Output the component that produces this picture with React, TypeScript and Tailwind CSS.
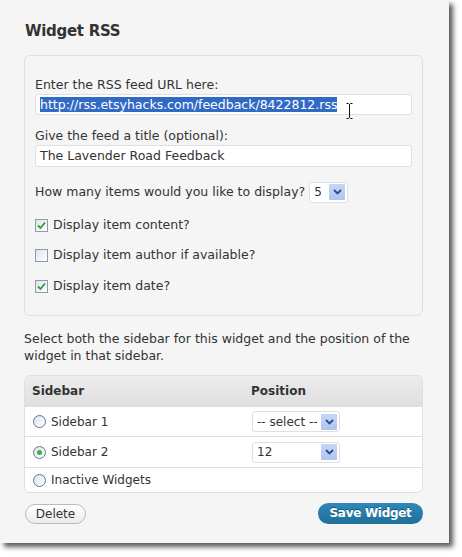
import React from "react";

function Check({ checked }: { checked: boolean }) {
  return (
    <span className="w-[13px] h-[13px] border border-[#8d9bab] bg-gradient-to-br from-[#dfe3e8] to-white flex items-center justify-center shrink-0">
      {checked && (
        <svg width="9" height="9" viewBox="0 0 9 9">
          <path d="M1 4.5 L3.5 7 L8 1.5" stroke="#2f9b3a" strokeWidth="1.8" fill="none" />
        </svg>
      )}
    </span>
  );
}

function Radio({ checked }: { checked: boolean }) {
  return (
    <span className="w-[13px] h-[13px] rounded-full border border-[#5b7895] bg-gradient-to-br from-[#dde3ea] to-white flex items-center justify-center shrink-0">
      {checked && <span className="w-[5px] h-[5px] rounded-full bg-[#3cb043]" />}
    </span>
  );
}

function Arrow() {
  return (
    <span className="w-[16px] h-[16px] bg-gradient-to-b from-[#c6d6f7] to-[#aec4ef] flex items-center justify-center rounded-[1px]">
      <svg width="9" height="6" viewBox="0 0 9 6">
        <path d="M1 1 L4.5 4.5 L8 1" stroke="#2b4c8c" strokeWidth="1.8" fill="none" />
      </svg>
    </span>
  );
}

function Select({ value, w }: { value: string; w: string }) {
  return (
    <div className={`${w} h-[21px] bg-white border border-[#dfdfdf] rounded-[3px] flex items-center justify-between pl-[4px] pr-[2px] text-[12px] text-[#333]`}>
      <span>{value}</span>
      <Arrow />
    </div>
  );
}

export default function App() {
  return (
    <div className="w-[462px] h-[557px] bg-white font-['DejaVu_Sans',sans-serif] text-[#333]">
      <div className="w-[449px] h-[543px] bg-[#f5f5f5] shadow-[4px_4px_5px_rgba(0,0,0,0.65)] px-[24px] pt-[21px]">
        <h2 className="text-[15px] font-bold leading-[20px] text-[#333] pl-[1px] tracking-[-0.3px]">Widget RSS</h2>
        <div className="mt-[14px] w-[399px] h-[261px] border border-[#dfdfdf] rounded-[6px] px-[10px] pt-[21px] text-[12.5px]">
          <div className="leading-[16px]">Enter the RSS feed URL here:</div>
          <div className="mt-[1px] h-[21px] bg-white border border-[#dfdfdf] rounded-[3px] flex items-center pl-[4px] relative">
            <span className="bg-[#316ac5] text-white leading-[15px]">http://rss.etsyhacks.com/feedback/8422812.rss</span>
            <svg className="absolute left-[310px] top-[8px]" width="7" height="16" viewBox="0 0 7 16">
              <path d="M0.5 0.5 H2.5 L3.5 1.5 L4.5 0.5 H6.5 M3.5 1.5 V14.5 M0.5 15.5 H2.5 L3.5 14.5 L4.5 15.5 H6.5" stroke="#111" strokeWidth="1" fill="none" />
            </svg>
          </div>
          <div className="mt-[13px] leading-[16px]">Give the feed a title (optional):</div>
          <div className="mt-[1px] h-[22px] bg-white border border-[#dfdfdf] rounded-[3px] flex items-center pl-[4px]">
            The Lavender Road Feedback
          </div>
          <div className="mt-[14px] flex items-center gap-[4px] h-[22px]">
            <span>How many items would you like to display?</span>
            <Select value="5" w="w-[39px]" />
          </div>
          <div className="mt-[14px] flex items-center gap-[5px] h-[16px]">
            <Check checked /> <span>Display item content?</span>
          </div>
          <div className="mt-[14px] flex items-center gap-[5px] h-[16px]">
            <Check checked={false} /> <span>Display item author if available?</span>
          </div>
          <div className="mt-[15px] flex items-center gap-[5px] h-[16px]">
            <Check checked /> <span>Display item date?</span>
          </div>
        </div>
        <div className="mt-[14px] text-[12.5px] leading-[17px] pr-[10px]">
          Select both the sidebar for this widget and the position of the widget in that sidebar.
        </div>
        <div className="mt-[11px] w-[399px] border border-[#dfdfdf] rounded-[6px] overflow-hidden text-[12px]">
          <div className="h-[30px] bg-gradient-to-b from-[#ececec] to-[#dfdfdf] flex items-center font-bold text-[#333]">
            <span className="w-[226px] pl-[7px]">Sidebar</span>
            <span>Position</span>
          </div>
          <div className="h-[30px] bg-white border-t border-[#dfdfdf] flex items-center">
            <span className="w-[227px] pl-[8px] flex items-center gap-[5px]"><Radio checked={false} />Sidebar 1</span>
            <Select value="-- select --" w="w-[88px]" />
          </div>
          <div className="h-[31px] bg-white border-t border-[#dfdfdf] flex items-center">
            <span className="w-[227px] pl-[8px] flex items-center gap-[5px]"><Radio checked />Sidebar 2</span>
            <Select value="12" w="w-[88px]" />
          </div>
          <div className="h-[25px] bg-white border-t border-[#dfdfdf] flex items-center">
            <span className="w-[227px] pl-[8px] flex items-center gap-[5px]"><Radio checked={false} />Inactive Widgets</span>
          </div>
        </div>
        <div className="mt-[10px] flex justify-between items-center w-[399px]">
          <button className="ml-[1px] w-[61px] h-[20px] rounded-full border border-[#bbb] bg-gradient-to-b from-white to-[#ececec] text-[12px] text-[#333] leading-[18px]">Delete</button>
          <button className="w-[105px] h-[21px] rounded-full bg-gradient-to-b from-[#2f89bb] to-[#1f6f98] text-white font-bold text-[12px] tracking-[-0.3px] leading-[21px] [text-shadow:0_-1px_0_rgba(0,0,0,0.35)]">Save Widget</button>
        </div>
      </div>
    </div>
  );
}
